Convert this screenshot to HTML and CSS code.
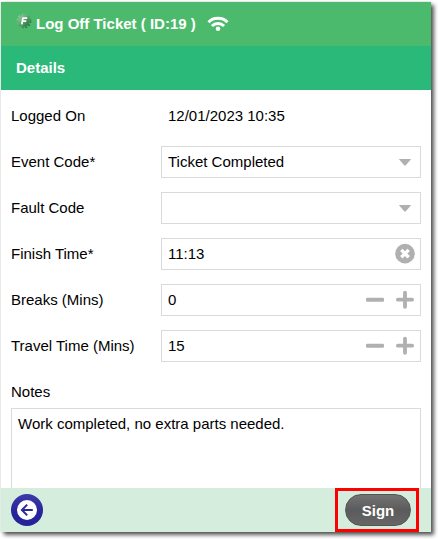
FILE: index.html
```html
<!DOCTYPE html>
<html lang="en">

<head>
  <meta charset="UTF-8">
  <meta name="viewport" content="width=device-width, initial-scale=1.0">
  <title>Log Off Ticket</title>
  <link rel="stylesheet" href="styles.css">
</head>

<body>
  <div class="app">
    <header class="title-bar">
      <svg class="logo" width="16" height="16" viewBox="0 0 16 16">
        <defs>
          <linearGradient id="gear" x1="0" y1="0" x2="1" y2="1">
            <stop offset="0" stop-color="#9bd3ad" />
            <stop offset="0.5" stop-color="#55a068" />
            <stop offset="1" stop-color="#226b38" />
          </linearGradient>
        </defs>
        <circle cx="8" cy="8" r="6.4" fill="none" stroke="url(#gear)" stroke-width="2" stroke-dasharray="2 1.35" />
        <circle cx="8" cy="8" r="5.8" fill="url(#gear)" />
        <path d="M5.8 11.3L6.9 5.2H11.2M6.4 8.2H10.2" fill="none" stroke="#fff" stroke-width="1.8" />
      </svg>
      <h1>Log Off Ticket ( ID:19 )</h1>
      <svg class="wifi" width="22" height="16" viewBox="0 0 22 16">
        <g fill="none" stroke="#fff" stroke-width="2.9">
          <path d="M1.5 6.2C6.4 1 15.6 1 20.5 6.2" />
          <path d="M4.9 10C8.3 6.6 13.7 6.6 17.1 10" />
        </g>
        <circle cx="11" cy="12.7" r="2.3" fill="#fff" />
      </svg>
    </header>
    <h2 class="section-bar">Details</h2>

    <form class="details">
      <div class="row">
        <label>Logged On</label>
        <div class="field plain"><span>12/01/2023 10:35</span></div>
      </div>
      <div class="row">
        <label>Event Code*</label>
        <div class="field">
          <span>Ticket Completed</span>
          <svg width="30" height="30" viewBox="0 0 30 30"><path d="M8.8 12H21.2L15.8 18.3Q15 19 14.2 18.3Z" fill="#b0b0b3" /></svg>
        </div>
      </div>
      <div class="row">
        <label>Fault Code</label>
        <div class="field">
          <span></span>
          <svg width="30" height="30" viewBox="0 0 30 30"><path d="M8.8 12H21.2L15.8 18.3Q15 19 14.2 18.3Z" fill="#b0b0b3" /></svg>
        </div>
      </div>
      <div class="row">
        <label>Finish Time*</label>
        <div class="field">
          <span>11:13</span>
          <svg width="30" height="30" viewBox="0 0 30 30">
            <circle cx="15" cy="14.6" r="9.8" fill="#b0b0b0" />
            <path d="M11.3 10.9L18.7 18.3M18.7 10.9L11.3 18.3" stroke="#fff" stroke-width="3.4" />
          </svg>
        </div>
      </div>
      <div class="row">
        <label>Breaks (Mins)</label>
        <div class="field">
          <span>0</span>
          <svg width="30" height="30" viewBox="0 0 30 30"><rect x="6" y="12.7" width="18" height="4" rx="1.2" fill="#b0b0b0" /></svg>
          <svg width="30" height="30" viewBox="0 0 30 30"><path d="M15 7.6V21.8M7.9 14.7H22.1" stroke="#b0b0b0" stroke-width="3.8" stroke-linecap="round" /></svg>
        </div>
      </div>
      <div class="row">
        <label>Travel Time (Mins)</label>
        <div class="field">
          <span>15</span>
          <svg width="30" height="30" viewBox="0 0 30 30"><rect x="6" y="12.7" width="18" height="4" rx="1.2" fill="#b0b0b0" /></svg>
          <svg width="30" height="30" viewBox="0 0 30 30"><path d="M15 7.6V21.8M7.9 14.7H22.1" stroke="#b0b0b0" stroke-width="3.8" stroke-linecap="round" /></svg>
        </div>
      </div>
      <label class="notes-label">Notes</label>
      <div class="notes">Work completed, no extra parts needed.</div>
    </form>

    <footer class="action-bar">
      <button class="back" title="Back">
        <svg width="20" height="20" viewBox="0 0 20 20">
          <circle cx="10" cy="10" r="10" fill="#fff" />
          <path d="M15.8 10H5M10.2 4.6L4.9 10L10.2 15.4" fill="none" stroke="#2b2a9c" stroke-width="2" />
        </svg>
      </button>
      <div class="highlight">
        <button class="sign">Sign</button>
      </div>
    </footer>
  </div>
</body>

</html>
```
FILE: styles.css
```css
* {
  box-sizing: border-box;
}

body {
  margin: 0;
  min-height: 100vh;
  padding: 2px 0 0 1px;
  background-color: #fff;
  color: #000;
  font-family: Arial, "Liberation Sans", sans-serif;
  font-size: 15px;
}

.app {
  display: flex;
  flex-direction: column;
  width: 430px;
  height: 530px;
  background-color: #fff;
  box-shadow: 3px 3px 4px rgba(0, 0, 0, 0.65), 0 0 2px rgba(0, 0, 0, 0.2);
}

h1,
h2 {
  margin: 0;
  font-size: 15px;
  font-weight: bold;
  color: #fff;
}

.title-bar {
  display: flex;
  align-items: center;
  flex: none;
  height: 44px;
  padding-left: 15px;
  background-color: #4cba6c;
}

.title-bar h1 {
  padding-bottom: 1px;
}

.logo {
  margin: 0 4px 6px 0;
}

.wifi {
  margin-left: 11px;
}

.section-bar {
  flex: none;
  height: 44px;
  padding-left: 15px;
  line-height: 44px;
  background-color: #2bb97a;
}

.details {
  flex: 1;
  display: flex;
  flex-direction: column;
  min-height: 0;
  padding: 10px 10px 0;
}

.row {
  display: flex;
  flex: none;
  align-items: center;
  height: 32px;
  margin-bottom: 14px;
}

.row label {
  width: 150px;
  padding-bottom: 2px;
}

.field {
  display: flex;
  align-items: center;
  width: 260px;
  height: 32px;
  padding-left: 6px;
  border: 1px solid #dadada;
}

.field span {
  flex: 1;
  padding-bottom: 2px;
}

.plain {
  border-color: transparent;
}

.notes-label {
  height: 32px;
  line-height: 32px;
}

.notes {
  flex: 1;
  padding: 6px;
  border: 1px solid #dadada;
  border-bottom: none;
}

.action-bar {
  display: flex;
  flex: none;
  align-items: center;
  justify-content: space-between;
  height: 44px;
  padding: 0 12px 0 10px;
  background-color: #d5eddd;
}

.back {
  display: flex;
  align-items: center;
  justify-content: center;
  width: 32px;
  height: 32px;
  padding: 0;
  border: none;
  border-radius: 50%;
  background: linear-gradient(#3d3ba9, #25249a 60%);
}

.highlight {
  display: flex;
  align-items: center;
  justify-content: flex-end;
  width: 84px;
  height: 44px;
  padding-right: 5px;
  border: 3px solid #fe0000;
}

.sign {
  width: 66px;
  height: 32px;
  padding: 0;
  border: 1px solid #555;
  border-radius: 16px;
  background: linear-gradient(#747474, #5b5b5b 50%, #666);
  color: #fff;
  font: bold 15px Arial, "Liberation Sans", sans-serif;
}
```
